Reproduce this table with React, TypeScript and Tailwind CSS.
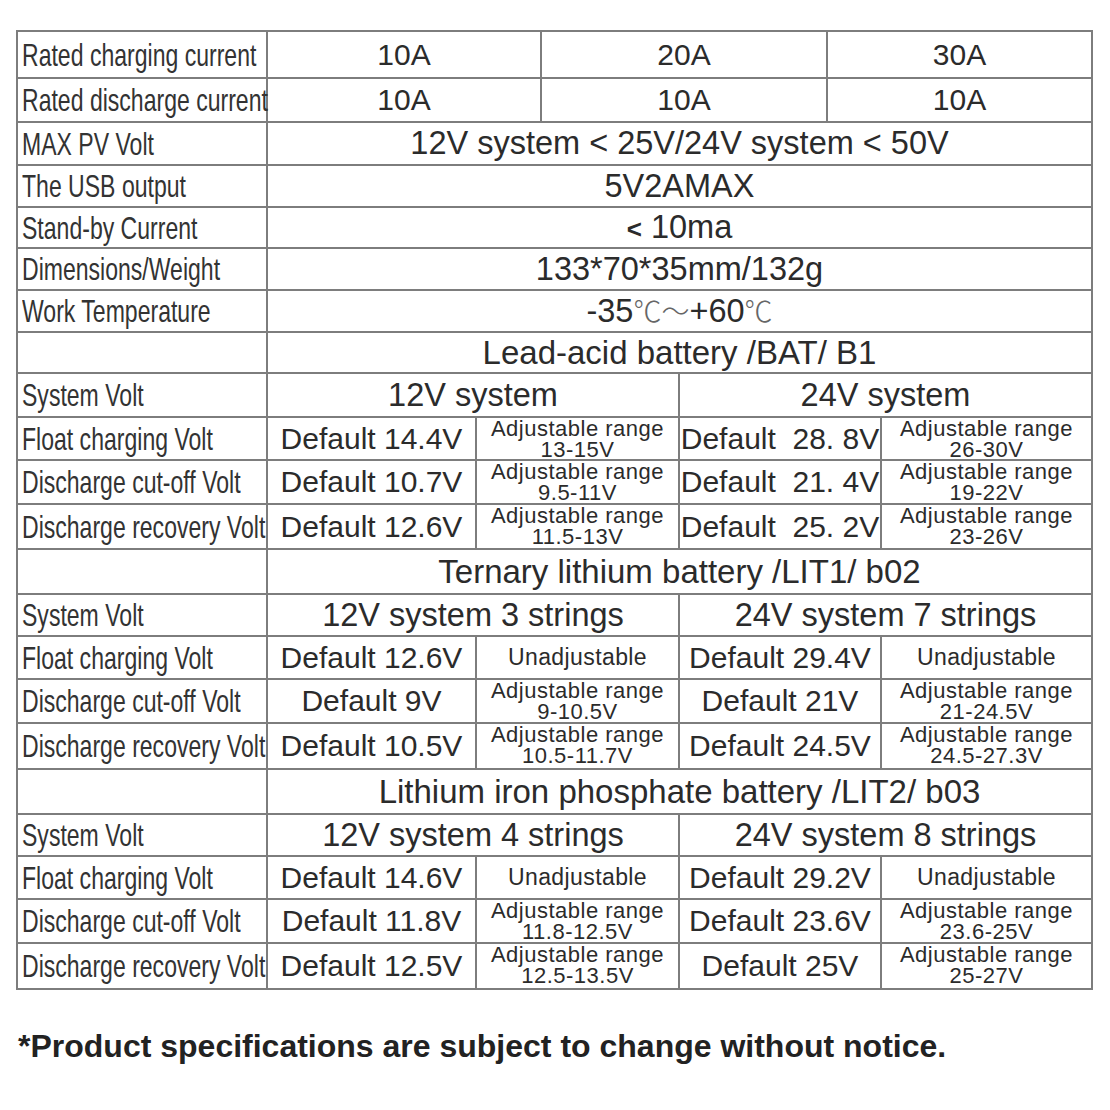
import React from "react";

// ============================================
// TYPES
// ============================================

type Adj = { range: string };
type CellValue = string | Adj;

interface BatterySection {
    title: string;
    systems: [string, string];
    heights: string[]; // header, system row, 3 rows
    rows: [string, CellValue, CellValue, CellValue, CellValue][];
}

// ============================================
// CONSTANTS
// ============================================

const LINE = "border-[#7d7d7d]";

const adj = (range: string): Adj => ({ range });

const GENERAL_ROWS: { label: string; h: string; values: string[] | React.ReactNode }[] = [
    { label: "Rated charging current", h: "h-[47px]", values: ["10A", "20A", "30A"] },
    { label: "Rated discharge current", h: "h-[44px]", values: ["10A", "10A", "10A"] },
    { label: "MAX PV Volt", h: "h-[43px]", values: "12V system < 25V/24V system < 50V" },
    { label: "The USB output", h: "h-[42px]", values: "5V2AMAX" },
    {
        label: "Stand-by Current",
        h: "h-[41px]",
        values: (
            <span>
                <span className="text-[26px] font-bold">&lt;</span> 10ma
            </span>
        ),
    },
    { label: "Dimensions/Weight", h: "h-[42px]", values: "133*70*35mm/132g" },
    {
        label: "Work Temperature",
        h: "h-[42px]",
        values: (
            <span>
                -35
                <span className="font-['Noto_Sans_CJK_SC',sans-serif] text-[28px] font-light text-[#666]">℃～</span>
                +60
                <span className="font-['Noto_Sans_CJK_SC',sans-serif] text-[28px] font-light text-[#666]">℃</span>
            </span>
        ),
    },
];

const SECTIONS: BatterySection[] = [
    {
        title: "Lead-acid battery /BAT/ B1",
        systems: ["12V system", "24V system"],
        heights: ["h-[41px]", "h-[44px]", "h-[43px]", "h-[44px]", "h-[45px]"],
        rows: [
            ["Float charging Volt", "Default 14.4V", adj("13-15V"), "Default  28. 8V", adj("26-30V")],
            ["Discharge cut-off Volt", "Default 10.7V", adj("9.5-11V"), "Default  21. 4V", adj("19-22V")],
            ["Discharge recovery Volt", "Default 12.6V", adj("11.5-13V"), "Default  25. 2V", adj("23-26V")],
        ],
    },
    {
        title: "Ternary lithium battery /LIT1/ b02",
        systems: ["12V system 3 strings", "24V system 7 strings"],
        heights: ["h-[45px]", "h-[42px]", "h-[43px]", "h-[44px]", "h-[46px]"],
        rows: [
            ["Float charging Volt", "Default 12.6V", "Unadjustable", "Default 29.4V", "Unadjustable"],
            ["Discharge cut-off Volt", "Default 9V", adj("9-10.5V"), "Default 21V", adj("21-24.5V")],
            ["Discharge recovery Volt", "Default 10.5V", adj("10.5-11.7V"), "Default 24.5V", adj("24.5-27.3V")],
        ],
    },
    {
        title: "Lithium iron phosphate battery /LIT2/ b03",
        systems: ["12V system 4 strings", "24V system 8 strings"],
        heights: ["h-[45px]", "h-[42px]", "h-[43px]", "h-[44px]", "h-[46px]"],
        rows: [
            ["Float charging Volt", "Default 14.6V", "Unadjustable", "Default 29.2V", "Unadjustable"],
            ["Discharge cut-off Volt", "Default 11.8V", adj("11.8-12.5V"), "Default 23.6V", adj("23.6-25V")],
            ["Discharge recovery Volt", "Default 12.5V", adj("12.5-13.5V"), "Default 25V", adj("25-27V")],
        ],
    },
];

const SUB_WIDTHS = ["w-[209px]", "w-[203px]", "w-[202px]", "flex-1"];

// ============================================
// CELLS
// ============================================

function Row({ h, children }: { h: string; children: React.ReactNode }) {
    return <div className={`flex border-b-2 ${LINE} ${h}`}>{children}</div>;
}

function Label({ children }: { children?: React.ReactNode }) {
    return (
        <div className={`flex w-[250px] shrink-0 items-center border-r-2 pl-[4px] ${LINE}`}>
            <span className="inline-block origin-left scale-x-[0.72] whitespace-nowrap text-[32px] leading-none text-[#333]">
                {children}
            </span>
        </div>
    );
}

function Val({ w, size = "text-[32.5px]", children }: { w: string; size?: string; children: React.ReactNode }) {
    return (
        <div className={`flex ${w} items-center justify-center border-r-2 ${LINE}`}>
            <span className={`whitespace-pre leading-none text-[#2b2b2b] ${size}`}>{children}</span>
        </div>
    );
}

function SubCell({ w, value }: { w: string; value: CellValue }) {
    if (typeof value !== "string") {
        return (
            <div className={`flex ${w} flex-col items-center border-r-2 ${LINE}`}>
                <span className="whitespace-nowrap text-[22px] leading-[21px] tracking-[0.5px] text-[#2b2b2b]">
                    Adjustable range
                </span>
                <span className="whitespace-nowrap text-[22px] leading-[21px] tracking-[0.5px] text-[#2b2b2b]">
                    {value.range}
                </span>
            </div>
        );
    }
    if (value === "Unadjustable") {
        return (
            <Val w={w} size="text-[23px] tracking-[0.4px]">
                {value}
            </Val>
        );
    }
    return (
        <Val w={w} size="text-[30px]">
            {value}
        </Val>
    );
}

// ============================================
// COMPONENT
// ============================================

export default function App() {
    return (
        <div className="min-h-screen bg-white font-['Liberation_Sans',Arial,sans-serif]">
            <div className="pt-[30px]">
                <div className={`ml-[16px] w-[1077px] border-l-2 border-t-2 ${LINE}`}>
                    {/* General specs */}
                    {GENERAL_ROWS.map((row) => (
                        <Row key={row.label} h={row.h}>
                            <Label>{row.label}</Label>
                            {Array.isArray(row.values) ? (
                                <>
                                    <Val w="w-[274px]" size="text-[30px]">{row.values[0]}</Val>
                                    <Val w="w-[286px]" size="text-[30px]">{row.values[1]}</Val>
                                    <Val w="flex-1" size="text-[30px]">{row.values[2]}</Val>
                                </>
                            ) : (
                                <Val w="flex-1">{row.values}</Val>
                            )}
                        </Row>
                    ))}

                    {/* Battery sections */}
                    {SECTIONS.map((section) => (
                        <React.Fragment key={section.title}>
                            <Row h={section.heights[0]}>
                                <Label />
                                <Val w="flex-1" size="text-[33px]">{section.title}</Val>
                            </Row>
                            <Row h={section.heights[1]}>
                                <Label>System Volt</Label>
                                <Val w="w-[412px]">{section.systems[0]}</Val>
                                <Val w="flex-1">{section.systems[1]}</Val>
                            </Row>
                            {section.rows.map((r, i) => (
                                <Row key={r[0]} h={section.heights[i + 2]}>
                                    <Label>{r[0]}</Label>
                                    {r.slice(1).map((v, j) => (
                                        <SubCell key={j} w={SUB_WIDTHS[j]} value={v as CellValue} />
                                    ))}
                                </Row>
                            ))}
                        </React.Fragment>
                    ))}
                </div>

                {/* Footnote */}
                <p className="ml-[18px] mt-[40px] whitespace-nowrap text-[32px] font-bold leading-[32px] text-[#222]">
                    *Product specifications are subject to change without notice.
                </p>
            </div>
        </div>
    );
}
